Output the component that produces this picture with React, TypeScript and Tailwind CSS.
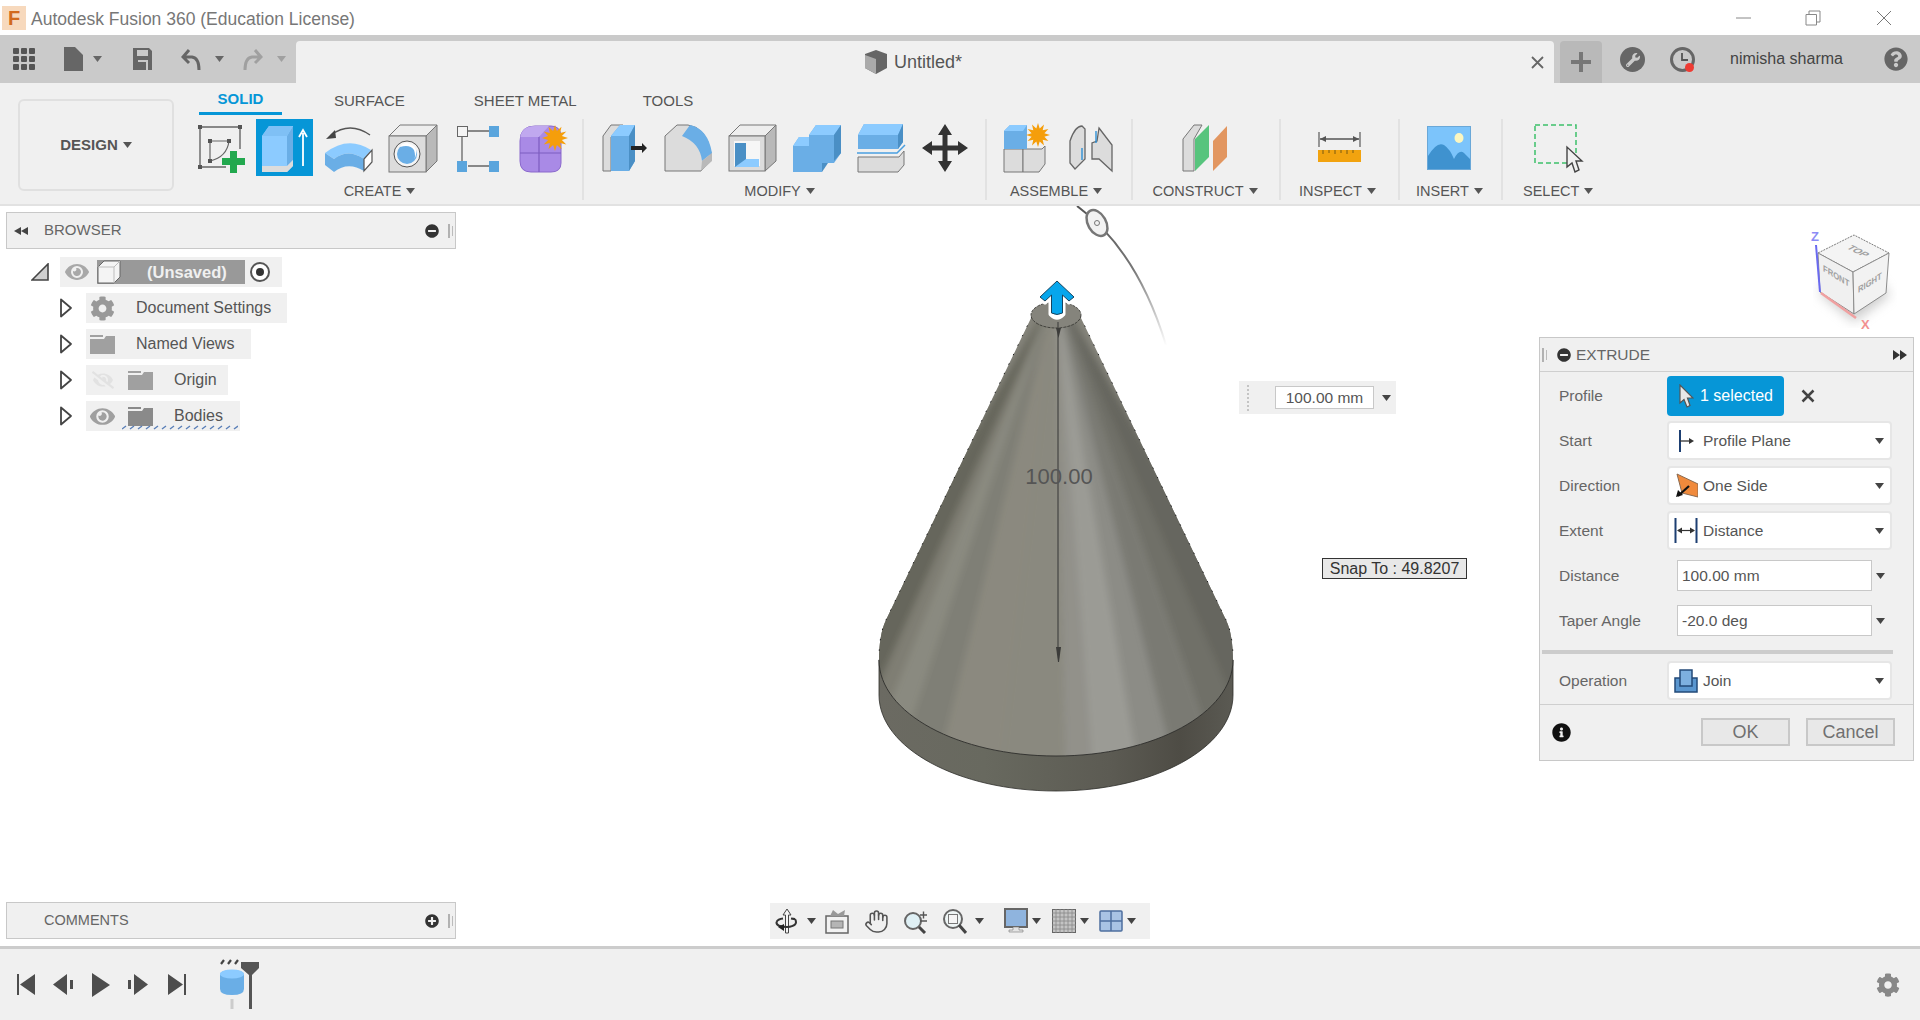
import React from 'react';
import { FaCog, FaEye, FaEyeSlash, FaInfoCircle, FaMinusCircle, FaPlusCircle, FaQuestionCircle, FaWrench } from 'react-icons/fa';
import { Hand } from 'lucide-react';

const BLUE = '#6aaee6';
const LIGHT = '#8ccbff';
const DARK = '#4a8fc5';
const GRAY = '#dcdcdc';
const LINE = '#666666';

const Caret = ({ className = '', color = '#555555' }: { className?: string; color?: string }) => (
  <svg width="9" height="6" viewBox="0 0 9 6" className={`shrink-0 ${className}`}>
    <path d="M0 0h9L4.500 6z" fill={color} />
  </svg>
);

const Tool = ({ children, active = false }: { children: React.ReactNode; active?: boolean }) => (
  <div className={`flex h-[57px] items-center justify-center ${active ? 'w-[57px] bg-[#0696d7]' : 'w-[64px]'}`}>
    {children}
  </div>
);

const Icon = ({ children, w = 50 }: { children: React.ReactNode; w?: number }) => (
  <svg width={w} height="50" viewBox={`0 0 ${w} 50`}>{children}</svg>
);

const Sketch = () => (
  <Icon>
    <path d="M4 4H44V26M4 4V44H30" fill="none" stroke={LINE} strokeWidth="1.400" />
    <path d="M14 18H33M14 18V38M33 18Q31 34 14 38" fill="none" stroke={LINE} strokeWidth="1.200" />
    {[[2, 2], [42, 2], [2, 42], [12, 16], [31, 16], [12, 36]].map(([x, y], i) => (
      <rect key={i} x={x} y={y} width="4" height="4" fill="#555555" />
    ))}
    <path d="M34 28h7v7h8v7h-8v8h-7v-8h-8v-7h8z" fill="#22a84e" />
  </Icon>
);

const Extrude = () => (
  <Icon>
    <path d="M2 13L9 3H33V43L27 49H2z" fill={LIGHT} />
    <path d="M27 13L33 3V37L27 43z" fill={BLUE} />
    <path d="M2 13L9 3H33L27 13z" fill="#7fc0f5" />
    <path d="M2 43H27L33 37V43L27 49H2z" fill={GRAY} />
    <path d="M43 43V10M39 14L43 7L47 14" fill="none" stroke="#ffffff" strokeWidth="1.800" />
  </Icon>
);

const Revolve = () => (
  <Icon>
    <path d="M7 12Q26 -2 46 12" fill="none" stroke="#555555" strokeWidth="1.500" />
    <path d="M2 16L11 7L12 15z" fill="#444444" />
    <path d="M1 30Q24 12 47 27L40 36Q24 25 10 36z" fill={LIGHT} />
    <path d="M1 30L10 36Q24 25 40 36V48Q24 38 10 49L1 42z" fill={BLUE} />
    <path d="M40 36L48 27V39L40 48z" fill="#ffffff" stroke="#555555" strokeWidth="1.200" />
  </Icon>
);

const HoleIcon = () => (
  <Icon>
    <path d="M1 13L12 2H49L38 13z" fill="#eeeeee" stroke="#777777" />
    <path d="M38 13L49 2V38L38 49z" fill="#b9b9b9" stroke="#777777" />
    <rect x="1" y="13" width="37" height="36" fill={GRAY} stroke="#777777" />
    <circle cx="19" cy="31" r="13" fill="#f4f4f4" stroke="#555555" />
    <circle cx="19" cy="31" r="10" fill={BLUE} />
    <path d="M12 24Q22 21 26 27Q28 33 26 37Q33 23 19 20Q14 20 12 24z" fill="#ffffff" />
  </Icon>
);

const BoxIcon = () => (
  <Icon w={44}>
    <path d="M12 8H33M6 14V38M12 43H33" stroke={LINE} strokeWidth="1.300" />
    <rect x="1.500" y="3.500" width="10" height="10" fill="#f4f4f4" stroke={LINE} />
    <rect x="33" y="3" width="10" height="11" fill="#5aa5dd" />
    <rect x="1" y="38" width="10" height="11" fill="#5aa5dd" />
    <rect x="33" y="38" width="10" height="11" fill="#5aa5dd" />
  </Icon>
);

const Star = ({ x, y, r }: { x: number; y: number; r: number }) => {
  const pts = Array.from({ length: 24 }, (_, i) => {
    const a = (i * Math.PI) / 12;
    const d = i % 2 === 0 ? r : r * 0.55;
    return `${(x + d * Math.cos(a)).toFixed(1)},${(y + d * Math.sin(a)).toFixed(1)}`;
  });
  return <polygon points={pts.join(' ')} fill="#f59e0b" />;
};

const NewBody = () => (
  <Icon>
    <path d="M1 18Q1 3 16 3H32Q42 3 42 14V40Q42 49 32 49H12Q1 49 1 38z" fill="#a98ae6" stroke="#8a68cc" />
    <path d="M1 30H42M20 10V49" stroke="#7d5cc0" strokeWidth="1.200" />
    <path d="M1 18Q1 3 16 3H30L20 14H1z" fill="#c0a8ef" />
    <Star x={36} y={15} r={13} />
  </Icon>
);

const PressPull = () => (
  <Icon w={46}>
    <path d="M1 48V13L9 2H21L9 14V48z" fill={GRAY} stroke="#777777" />
    <path d="M9 13L18 2H33V38L27 48H9z" fill={BLUE} />
    <path d="M9 13L18 2H33L27 13z" fill={LIGHT} />
    <path d="M27 13L33 2V38L27 48z" fill={DARK} />
    <path d="M29 23H40V20L45 25L40 30V27H29z" fill="#222222" />
  </Icon>
);

const Fillet = () => (
  <Icon>
    <path d="M1 48V13L13 2H24Q42 4 47 30V37L37 48z" fill={GRAY} stroke="#777777" />
    <path d="M26 2Q44 6 48 30L38 38Q36 20 18 13z" fill={BLUE} />
    <path d="M38 38L48 30V38L37 48z" fill="#b9b9b9" />
  </Icon>
);

const Shell = () => (
  <Icon>
    <path d="M1 13L12 2H48L37 13z" fill="#eeeeee" stroke="#777777" />
    <path d="M37 13L48 2V38L37 48z" fill="#b9b9b9" stroke="#777777" />
    <rect x="1" y="13" width="36" height="35" fill={GRAY} stroke="#777777" />
    <rect x="6" y="18" width="26" height="25" fill="#f6f6f6" />
    <path d="M7 20H18V36H31V44H7z" fill={DARK} />
    <path d="M18 36L7 44H31V36z" fill={LIGHT} />
  </Icon>
);

const Combine = () => (
  <Icon>
    <path d="M17 12L24 2H49V30L42 40H30V49H1V23L7 14H17z" fill={BLUE} />
    <path d="M17 12L24 2H49L42 12z" fill={LIGHT} />
    <path d="M42 12L49 2V30L42 38z" fill={DARK} />
    <path d="M1 23L7 14H17V23z" fill={LIGHT} />
    <path d="M30 40H36L30 49z" fill={DARK} />
  </Icon>
);

const OffsetFace = () => (
  <Icon>
    <path d="M2 12L8 1H47V19L42 26H2z" fill={BLUE} />
    <path d="M2 12L8 1H47L42 12z" fill={LIGHT} />
    <path d="M42 12L47 1V19L42 26z" fill={DARK} />
    <path d="M1 30H41L49 22" fill="none" stroke="#4a9fe0" strokeWidth="1.500" />
    <path d="M2 34H43L48 28V42L42 49H2z" fill={GRAY} stroke="#777777" />
  </Icon>
);

const Move = () => (
  <Icon w={48}>
    <path d="M24 1L31 12H26.500V22.500H37V18L47 25L37 32V27.500H26.500V38H31L24 49L17 38H21.500V27.500H11V32L1 25L11 18V22.500H21.500V12H17z" fill="#333333" />
  </Icon>
);

const Assemble = () => (
  <Icon w={48}>
    <path d="M1 26H20V49H1z" fill={GRAY} stroke="#777777" />
    <path d="M20 26H39L42 23V41L36 49H20z" fill={GRAY} stroke="#777777" />
    <path d="M1 8L7 2H24V26H1z" fill={BLUE} />
    <path d="M1 8L7 2H24L20 8z" fill={LIGHT} />
    <Star x={35} y={12} r={12} />
  </Icon>
);

const Joint = () => (
  <Icon w={44}>
    <path d="M1 18Q6 3 13 3L16 6V36L6 46L1 40z" fill={GRAY} stroke="#666666" strokeWidth="1.300" />
    <path d="M30 5L43 22V48L30 36L23 36V20L28 18z" fill={GRAY} stroke="#666666" strokeWidth="1.300" />
    <path d="M27 8V20M13 25V37" stroke="#2d8fd5" strokeWidth="1.400" />
  </Icon>
);

const Construct = () => (
  <Icon w={46}>
    <path d="M1 48V16L12 2H20L12 16V48z" fill={GRAY} stroke="#777777" />
    <path d="M13 16L27 2V34L13 48z" fill="#57c47d" />
    <path d="M31 18L45 3V34L31 48z" fill="#e29660" />
  </Icon>
);

const Inspect = () => (
  <Icon w={44}>
    <path d="M2 9V24M43 9V24" stroke="#666666" strokeWidth="1.300" />
    <path d="M3 16H42" stroke="#555555" strokeWidth="1.300" />
    <path d="M3 16L9 13V19zM42 16L36 13V19z" fill="#555555" />
    <rect x="1" y="27" width="43" height="12" fill="#f2a30f" />
    <path d="M6 27v4M12 27v3M18 27v4M24 27v3M30 27v4M36 27v3" stroke="#7a5a10" strokeWidth="1" />
  </Icon>
);

const Insert = () => (
  <Icon w={44}>
    <rect x="0.500" y="3.500" width="43" height="43" fill="#7cc4fb" stroke="#6aa8d8" />
    <ellipse cx="32" cy="15" rx="4.500" ry="5" fill="#fbf6c0" />
    <path d="M1 33Q10 18 17 22Q23 26 27 36Q32 26 37 30L43 36V46H1z" fill="#3f92cf" />
  </Icon>
);

const Select = () => (
  <svg width="50" height="50" viewBox="0 0 50 50">
    <rect x="1" y="2" width="41" height="38" fill="none" stroke="#3cc06a" strokeWidth="1.500" strokeDasharray="5 3" />
    <path d="M33 24V44L38 40L41 49L45 47L42 38H48z" fill="#f0f0f0" stroke="#444444" strokeWidth="1.400" />
  </svg>
);

const Group = ({ className, iconPad = '', labelPad = '', label, children }: { className: string; iconPad?: string; labelPad?: string; label: string; children: React.ReactNode }) => (
  <div className={`flex h-[81px] shrink-0 flex-col border-r-2 border-[#e2e2e2] ${className}`}>
    <div className={`flex h-[57px] items-center ${iconPad}`}>{children}</div>
    <div className={`mt-[7px] flex h-[18px] items-center justify-center text-[14.5px] text-[#555555] ${labelPad}`}>
      {label}
      <Caret className="ml-[5px] mb-[2px]" />
    </div>
  </div>
);

const Arrow = () => (
  <svg width="14" height="20" viewBox="0 0 14 20">
    <path d="M2 1.500L12 10L2 18.500z" fill="#ffffff" stroke="#444444" strokeWidth="1.800" strokeLinejoin="round" />
  </svg>
);

const Folder = ({ dark = false }: { dark?: boolean }) => (
  <svg width="25" height="19" viewBox="0 0 25 19">
    <path d="M0 0H13V2H0zM0 4H14L16 1H25V19H0z" fill={dark ? '#8a8a8a' : '#a0a0a0'} />
  </svg>
);

const BrowserRow = ({ className, children }: { className: string; children: React.ReactNode }) => (
  <div className="mb-[6px] flex h-[30px] items-center pl-[53px]">
    <Arrow />
    <div className={`ml-[13px] flex h-[30px] items-center bg-[#f0f0f0] text-[16px] text-[#555555] ${className}`}>{children}</div>
  </div>
);

const Grip = () => (
  <svg width="6" height="20" viewBox="0 0 6 20">
    <path d="M1 3V17" stroke="#888888" strokeWidth="1.200" />
    <path d="M4.500 5V15" stroke="#bbbbbb" strokeWidth="1" />
  </svg>
);

const Dropdown = ({ icon, text }: { icon: React.ReactNode; text: string }) => (
  <div className="flex h-[39px] w-[225px] items-center rounded-sm border-2 border-[#e6e6e6] bg-white">
    <div className="flex w-[34px] justify-center">{icon}</div>
    <span className="text-[15.500px] text-[#555555]">{text}</span>
    <Caret className="ml-auto mr-[6px]" color="#444444" />
  </div>
);

const Row = ({ label, children }: { label: string; children: React.ReactNode }) => (
  <div className="mb-[6px] flex h-[39px] items-center">
    <div className="w-[127px] pl-[19px] text-[15.500px] text-[#666666]">{label}</div>
    {children}
  </div>
);

const NumberRow = ({ label, value }: { label: string; value: string }) => (
  <div className="mb-[14px] flex h-[31px] items-center">
    <div className="w-[137px] pl-[19px] text-[15.500px] text-[#666666]">{label}</div>
    <div className="flex h-[31px] w-[195px] items-center border border-[#c8c8c8] bg-white pl-[4px] text-[15.500px] text-[#555555]">{value}</div>
    <Caret className="ml-[4px]" color="#444444" />
  </div>
);

const CONE = 'M1032 316L886 620C881 630 879 645 879 660C879 713 958 756 1056 756S1233 713 1233 660C1233 645 1231 630 1226 620L1080 316z';

// shading bands run from the tip down to the base
const BANDS: [number, number, string][] = [
  [-0.1, 0.03, '#66665c'],
  [0.03, 0.08, '#7f7e73'],
  [0.08, 0.15, '#8a8a80'],
  [0.15, 0.24, '#7f7f76'],
  [0.24, 0.38, '#8b897f'],
  [0.38, 0.52, '#8a897f'],
  [0.52, 0.58, '#92918a'],
  [0.58, 0.68, '#9b9b95'],
  [0.68, 0.76, '#8c8c86'],
  [0.76, 0.86, '#7a7a73'],
  [0.86, 0.95, '#6f6f68'],
  [0.95, 1.1, '#66665f'],
];

const Scene = () => (
  <svg className="absolute inset-0" width="1920" height="740" viewBox="0 206 1920 740">
    <defs>
      <linearGradient id="rimFill" x1="878" x2="1234" y1="0" y2="0" gradientUnits="userSpaceOnUse">
        <stop offset="0" stopColor="#6b6a62" />
        <stop offset="0.3" stopColor="#68695f" />
        <stop offset="0.65" stopColor="#5c5b53" />
        <stop offset="0.85" stopColor="#4e4c45" />
        <stop offset="1" stopColor="#5b5a53" />
      </linearGradient>
      <linearGradient id="arcFade" x1="1080" y1="206" x2="1168" y2="345" gradientUnits="userSpaceOnUse">
        <stop offset="0" stopColor="#555555" />
        <stop offset="0.5" stopColor="#777777" />
        <stop offset="1" stopColor="#ffffff" />
      </linearGradient>
      <clipPath id="coneClip"><path d={CONE} /></clipPath>
      <filter id="soft" x="-20%" y="-20%" width="140%" height="140%"><feGaussianBlur stdDeviation="3.500" /></filter>
      <filter id="cubeShadow"><feGaussianBlur stdDeviation="6" /></filter>
    </defs>

    {/* rotate handle */}
    <path d="M1077 206Q1137 250 1166 345" fill="none" stroke="url(#arcFade)" strokeWidth="2" />
    <ellipse cx="1097" cy="223" rx="9" ry="14" transform="rotate(-30 1097 223)" fill="#f2f2f2" stroke="#777777" strokeWidth="2.500" />
    <circle cx="1097" cy="223" r="2.500" fill="none" stroke="#777777" />

    {/* cone with base disc */}
    <path d="M879 660V695C879 748 958 791 1056 791S1233 748 1233 695V660z" fill="url(#rimFill)" stroke="#2d2d2a" strokeWidth="0.800" />
    <path d={CONE} fill="#85847b" />
    <g clipPath="url(#coneClip)">
      <g filter="url(#soft)">
        {BANDS.map(([a, b, c], i) => (
          <polygon key={i} points={`1056,290 ${1056 + (2 * a - 1) * 244},800 ${1056 + (2 * b - 1) * 244},800`} fill={c} />
        ))}
      </g>
    </g>
    <path d="M1032 316L886 620C881 630 879 645 879 660M1080 316L1226 620C1231 630 1233 645 1233 660" fill="none" stroke="#222222" strokeWidth="1" strokeDasharray="1.500 9" />
    <path d="M879 660C879 713 958 756 1056 756S1233 713 1233 660" fill="none" stroke="#2d2d2a" strokeWidth="0.900" />
    <ellipse cx="1056" cy="315" rx="25" ry="13" fill="#85847c" stroke="#2d2d2a" strokeWidth="0.800" strokeDasharray="3 1" />

    {/* dimension line */}
    <path d="M1058 322V655" stroke="#4a4a48" strokeWidth="1.300" />
    <path d="M1056 647H1061L1059 662H1058z" fill="#3c3c3a" />
    <path d="M1056 328H1061L1058.500 338z" fill="#3c3c3a" />
    <text x="1059" y="484" textAnchor="middle" fontFamily="Liberation Sans" fontSize="22" fill="#555555">100.00</text>

    {/* drag arrow */}
    <path d="M1057 279L1075 297L1069 302L1063 296V314Q1057 320 1051 314V296L1045 302L1039 297z" fill="#ffffff" stroke="#ffffff" strokeWidth="5" strokeLinejoin="round" />
    <path d="M1057 281L1074 297L1069 301L1062.500 295V313Q1057 316 1051.500 313V295L1045 301L1040 297z" fill="#06a6ec" stroke="#17445f" strokeWidth="1" strokeLinejoin="round" />

    {/* view cube */}
    <path d="M1820 294L1854 322L1890 295L1870 270H1830z" fill="#9a9a9a" opacity="0.5" filter="url(#cubeShadow)" />
    <path d="M1818 253L1854 235L1889 253L1853 272z" fill="#f4f4f4" stroke="#7b7b7b" strokeDasharray="2 1" />
    <path d="M1818 253L1853 272L1854 314L1820 292z" fill="#f0f0f0" stroke="#8b8b8b" />
    <path d="M1853 272L1889 253L1886 293L1854 314z" fill="#f2f2f2" stroke="#8b8b8b" />
    <path d="M1816 245L1820 292" stroke="#6a6af0" strokeWidth="2" />
    <path d="M1821 293L1856 318" stroke="#f0a0a0" strokeWidth="2.500" />
    <text x="1811" y="241" fontFamily="Liberation Sans" fontSize="13" fontWeight="700" fill="#8c8cf5">Z</text>
    <text x="1861" y="329" fontFamily="Liberation Sans" fontSize="13" fontWeight="700" fill="#f29090">X</text>
    <text transform="matrix(0.9 0.45 -0.9 0.45 1846 248)" fontFamily="Liberation Sans" fontSize="10" fontWeight="700" fill="#a0a0a0">TOP</text>
    <text transform="matrix(0.85 0.52 0 1 1823 271)" fontFamily="Liberation Sans" fontSize="9" fontWeight="700" fill="#a0a0a0">FRONT</text>
    <text transform="matrix(0.85 -0.52 0 1 1858 293)" fontFamily="Liberation Sans" fontSize="9" fontWeight="700" fill="#a0a0a0">RIGHT</text>
  </svg>
);

const NavBar = () => (
  <div className="absolute left-[770px] top-[697px] flex h-[36px] w-[380px] items-center bg-[#f0f0f0]">
    <svg className="ml-[5px]" width="24" height="28" viewBox="0 0 24 28">
      <path d="M12 2L8 8H10.500V26H13.500V8H16z" fill="#f4f4f4" stroke="#444444" />
      <path d="M20 12Q24 19 12 20Q1 20 1.500 15M1.500 15Q3 12 8 11.500M16 11.500Q19 12 20 12" fill="none" stroke="#333333" strokeWidth="2" />
      <path d="M9 17L3 20L9 24z" fill="#222222" />
    </svg>
    <Caret className="ml-[8px]" color="#444444" />
    <svg className="ml-[9px]" width="24" height="26" viewBox="0 0 24 26">
      <rect x="1" y="8" width="22" height="17" fill="#f2f2f2" stroke="#666666" strokeWidth="1.500" />
      <rect x="6" y="13" width="12" height="7" fill="#b5b5b5" stroke="#777777" />
      <path d="M5 8L8 2L13 6L20 2L19 8z" fill="#999999" />
    </svg>
    <Hand className="ml-[15px]" size={25} color="#555555" strokeWidth={1.500} />
    <svg className="ml-[14px]" width="26" height="26" viewBox="0 0 26 26">
      <circle cx="10" cy="13" r="8" fill="#dff0f5" stroke="#666666" strokeWidth="2" />
      <path d="M16 19L22 25" stroke="#444444" strokeWidth="3" />
      <path d="M17 7h7M20.500 3.500v7M17 13h7" stroke="#555555" strokeWidth="1.400" />
    </svg>
    <svg className="ml-[14px]" width="24" height="26" viewBox="0 0 24 26">
      <circle cx="10" cy="11" r="9" fill="#eef5f5" stroke="#666666" strokeWidth="2" />
      <rect x="5.500" y="6.500" width="9" height="9" fill="#f5f5f5" stroke="#777777" />
      <path d="M16 17L23 25" stroke="#444444" strokeWidth="3" />
    </svg>
    <Caret className="ml-[8px]" color="#444444" />
    <svg className="ml-[20px]" width="24" height="26" viewBox="0 0 24 26">
      <rect x="1" y="1" width="22" height="18" fill="#8fb4de" stroke="#666666" strokeWidth="2" />
      <path d="M9 19H15V22H19V24H5V22H9z" fill="#e4e4e4" stroke="#777777" strokeWidth="0.600" />
    </svg>
    <Caret className="ml-[4px]" color="#444444" />
    <svg className="ml-[11px]" width="24" height="24" viewBox="0 0 24 24">
      <rect x="0.500" y="0.500" width="23" height="23" fill="#c4c4c4" stroke="#666666" />
      <path d="M4 0V24M8 0V24M12 0V24M16 0V24M20 0V24M0 4H24M0 8H24M0 12H24M0 16H24M0 20H24" stroke="#888888" strokeWidth="0.800" />
    </svg>
    <Caret className="ml-[4px]" color="#444444" />
    <svg className="ml-[10px]" width="24" height="22" viewBox="0 0 24 22">
      <rect x="1" y="1" width="22" height="20" rx="1" fill="#a9c3e4" stroke="#4d6f9f" strokeWidth="1.500" />
      <path d="M12 1V21M1 11H23" stroke="#4d6f9f" strokeWidth="1.500" />
    </svg>
    <Caret className="ml-[4px]" color="#444444" />
  </div>
);

const ExtrudePanel = () => (
  <div className="absolute left-[1539px] top-[131px] h-[424px] w-[375px] border border-[#c8c8c8] bg-[#f0f0f0]">
    <div className="flex h-[34px] items-center border-b border-[#cfcfcf] pl-[2px]">
      <Grip />
      <FaMinusCircle className="ml-[9px]" size={14} color="#333333" />
      <span className="ml-[5px] text-[15.500px] text-[#666666]">EXTRUDE</span>
      <svg className="ml-auto mr-[6px]" width="14" height="10" viewBox="0 0 14 10">
        <path d="M0 0L7 5L0 10zM7 0L14 5L7 10z" fill="#333333" />
      </svg>
    </div>
    <div className="pt-[4px]">
      <div className="mb-[5px] flex h-[40px] items-center">
        <div className="w-[127px] pl-[19px] text-[15.500px] text-[#666666]">Profile</div>
        <div className="flex h-[40px] w-[117px] items-center rounded-sm bg-[#0696d7] pl-[11px] text-[16px] text-white">
          <svg width="16" height="24" viewBox="0 0 16 24">
            <path d="M2 1V19L6 15.500L9 23L12 21.500L9.500 14H15z" fill="#e8e8e8" stroke="#555555" strokeWidth="1.200" />
          </svg>
          <span className="ml-[6px]">1 selected</span>
        </div>
        <svg className="ml-[17px]" width="14" height="14" viewBox="0 0 14 14">
          <path d="M1.500 1.500L12.500 12.500M12.500 1.500L1.500 12.500" stroke="#444444" strokeWidth="2.500" />
        </svg>
      </div>
      <Row label="Start">
        <Dropdown
          text="Profile Plane"
          icon={
            <svg width="16" height="24" viewBox="0 0 16 24">
              <path d="M2 1V23" stroke="#1d3f72" strokeWidth="2" />
              <path d="M2 12H12" stroke="#333333" strokeWidth="1.300" />
              <path d="M11 9L16 12L11 15z" fill="#333333" />
            </svg>
          }
        />
      </Row>
      <Row label="Direction">
        <Dropdown
          text="One Side"
          icon={
            <svg width="23" height="25" viewBox="0 0 23 25">
              <path d="M2 1L23 11V24L7 20z" fill="#f08a3c" stroke="#8a6a50" />
              <path d="M14 13L3 23" stroke="#111111" strokeWidth="2.200" />
              <path d="M1 24L3 17L8 22z" fill="#111111" />
            </svg>
          }
        />
      </Row>
      <Row label="Extent">
        <Dropdown
          text="Distance"
          icon={
            <svg width="24" height="25" viewBox="0 0 24 25">
              <path d="M1.500 0V25M22.500 0V25" stroke="#1d3f72" strokeWidth="2" />
              <path d="M4 12.500H20" stroke="#333333" strokeWidth="1.200" />
              <path d="M3 12.500L8 9.500V15.500zM21 12.500L16 9.500V15.500z" fill="#333333" />
            </svg>
          }
        />
      </Row>
      <div className="pt-[4px]">
        <NumberRow label="Distance" value="100.00 mm" />
        <NumberRow label="Taper Angle" value="-20.0 deg" />
      </div>
      <div className="ml-[2px] mt-[1px] h-[4px] w-[351px] bg-[#cccccc]" />
      <div className="mt-[7px]">
        <Row label="Operation">
          <Dropdown
            text="Join"
            icon={
              <svg width="24" height="24" viewBox="0 0 24 24">
                <rect x="1" y="9" width="22" height="14" fill="#5a96cf" stroke="#234a78" strokeWidth="1.500" />
                <rect x="6" y="1" width="12" height="16" fill="#7db0e0" stroke="#234a78" strokeWidth="1.500" />
              </svg>
            }
          />
        </Row>
      </div>
    </div>
    <div className="-mt-[2px] flex h-[55px] items-center border-t border-[#cfcfcf]">
      <FaInfoCircle className="ml-[12px]" size={19} color="#111111" />
      <button className="ml-[130px] h-[28px] w-[89px] border-2 border-[#c8c8c8] bg-[#e8e8e8] text-[18px] leading-none text-[#707070]">OK</button>
      <button className="ml-[16px] h-[28px] w-[89px] border-2 border-[#c8c8c8] bg-[#e8e8e8] text-[18px] leading-none text-[#707070]">Cancel</button>
    </div>
  </div>
);

export default function App() {
  return (
    <div className="flex h-screen w-full flex-col overflow-hidden bg-white font-['Liberation_Sans',Arial,sans-serif]">
      {/* window title */}
      <div className="flex h-[35px] shrink-0 items-center">
        <div className="ml-[2px] flex h-[24px] w-[24px] items-center justify-center bg-[#f7d9bd] text-[20px] font-bold leading-none text-[#d2691e]">F</div>
        <span className="ml-[5px] pt-[3px] text-[17.5px] text-[#777777]">Autodesk Fusion 360 (Education License)</span>
        <svg className="ml-auto" width="16" height="2" viewBox="0 0 16 2"><path d="M0 1H15" stroke="#888888" /></svg>
        <svg className="ml-[53px]" width="16" height="16" viewBox="0 0 16 16">
          <path d="M1 4.500H11.500V15H1zM4 4V1H15V12H12" fill="none" stroke="#888888" />
        </svg>
        <svg className="ml-[55px] mr-[28px]" width="16" height="16" viewBox="0 0 16 16">
          <path d="M1 1L15 15M15 1L1 15" stroke="#777777" />
        </svg>
      </div>

      {/* tab bar */}
      <div className="flex h-[48px] shrink-0 bg-[#cacaca]">
        <div className="flex w-[296px] items-center pb-[1px]">
          <svg className="ml-[13px]" width="22" height="22" viewBox="0 0 22 22">
            {[0, 8, 16].flatMap((y) => [0, 8, 16].map((x) => (
              <rect key={`${x}-${y}`} x={x} y={y} width="6" height="6" rx="1" fill="#555555" />
            )))}
          </svg>
          <svg className="ml-[28px]" width="20" height="24" viewBox="0 0 20 24">
            <path d="M1 0H12L20 8V24H1z" fill="#666666" />
          </svg>
          <Caret className="ml-[10px]" color="#666666" />
          <svg className="ml-[30px]" width="21" height="24" viewBox="0 0 21 24">
            <path d="M1 1H17L20 4V23H1z" fill="#666666" />
            <rect x="5" y="3" width="11" height="6" fill="#cacaca" />
            <path d="M6 14H15V23" fill="none" stroke="#cacaca" strokeWidth="2" />
          </svg>
          <svg className="ml-[28px]" width="20" height="24" viewBox="0 0 20 24">
            <path d="M8 3L2 10L8 16M2 10H11Q18 11 18 23" fill="none" stroke="#666666" strokeWidth="3" />
          </svg>
          <Caret className="ml-[14px]" color="#666666" />
          <svg className="ml-[19px]" width="20" height="24" viewBox="0 0 20 24">
            <path d="M12 3L18 10L12 16M18 10H9Q2 11 2 23" fill="none" stroke="#a0a0a0" strokeWidth="3" />
          </svg>
          <Caret className="ml-[14px]" color="#a0a0a0" />
        </div>
        <div className="mt-[6px] flex w-[1258px] items-center rounded-t-[4px] bg-[#f0f0f0] pl-[568px]">
          <svg width="24" height="24" viewBox="0 0 24 24">
            <path d="M1 4L12 0L23 4V18L12 24L1 18z" fill="#666666" />
            <path d="M1 5L12 9V24L1 18z" fill="#aaaaaa" />
          </svg>
          <span className="ml-[6px] pt-[1px] text-[18px] text-[#555555]">Untitled*</span>
          <svg className="ml-auto mr-[10px]" width="13" height="13" viewBox="0 0 13 13">
            <path d="M1 1L12 12M12 1L1 12" stroke="#666666" strokeWidth="1.800" />
          </svg>
        </div>
        <div className="ml-[6px] mt-[6px] flex h-[42px] w-[42px] items-center justify-center rounded-t-[4px] bg-[#b9b9b9]">
          <svg width="20" height="20" viewBox="0 0 20 20"><path d="M8 0H12V8H20V12H12V20H8V12H0V8H8z" fill="#777777" /></svg>
        </div>
        <div className="ml-[18px] mt-[12px] flex h-[25px] w-[25px] items-center justify-center rounded-full bg-[#666666]">
          <FaWrench size={14} color="#cacaca" />
        </div>
        <div className="relative ml-[25px] mt-[12px] flex h-[25px] w-[25px] items-center justify-center rounded-full border-[3px] border-[#666666]">
          <svg width="15" height="15" viewBox="0 0 15 15"><path d="M7 1V8H13" fill="none" stroke="#555555" strokeWidth="1.800" /></svg>
          <span className="absolute -bottom-[3px] -right-[2px] h-[9px] w-[9px] rounded-full bg-[#ee3b33]" />
        </div>
        <span className="ml-[35px] mt-[15px] text-[16px] leading-[18px] text-[#444444]">nimisha sharma</span>
        <FaQuestionCircle className="ml-[41px] mt-[12px]" size={24} color="#666666" />
      </div>

      {/* ribbon */}
      <div className="flex h-[123px] shrink-0 border-b-2 border-[#e2e2e2] bg-[#f0f0f0]">
        <div className="ml-[18px] mt-[16px] flex h-[92px] w-[156px] items-center justify-center rounded-[6px] border-2 border-[#e0e0e0] text-[15px] font-bold text-[#555555]">
          DESIGN
          <Caret className="ml-[5px]" />
        </div>
        <div className="ml-[15px] flex flex-col">
          <div className="flex h-[36px] text-[15px] text-[#555555]">
            <div className="ml-[10px] flex h-[32px] w-[83px] items-center justify-center border-b-[3px] border-[#0696d7] pt-[4px] font-bold text-[#0696d7]">SOLID</div>
            <div className="ml-[52px] flex h-[32px] items-center pt-[4px]">SURFACE</div>
            <div className="ml-[69px] flex h-[32px] items-center pt-[4px]">SHEET METAL</div>
            <div className="ml-[66px] flex h-[32px] items-center pt-[4px]">TOOLS</div>
          </div>
          <div className="flex">
            <Group className="w-[395px]" labelPad="pr-[12px]" label="CREATE">
              <Tool><Sketch /></Tool>
              <div className="w-[3px]" />
              <Tool active><Extrude /></Tool>
              <div className="w-[4px]" />
              <Tool><Revolve /></Tool>
              <Tool><HoleIcon /></Tool>
              <div className="w-[1px]" />
              <Tool><BoxIcon /></Tool>
              <div className="w-[2px]" />
              <Tool><NewBody /></Tool>
            </Group>
            <Group className="w-[403px]" iconPad="pl-[9px]" labelPad="pr-[10px]" label="MODIFY">
              <Tool><PressPull /></Tool>
              <Tool><Fillet /></Tool>
              <Tool><Shell /></Tool>
              <Tool><Combine /></Tool>
              <Tool><OffsetFace /></Tool>
              <Tool><Move /></Tool>
            </Group>
            <Group className="w-[146px]" iconPad="pl-[8px]" labelPad="pr-[6px]" label="ASSEMBLE">
              <Tool><Assemble /></Tool>
              <Tool><Joint /></Tool>
            </Group>
            <Group className="w-[148px]" iconPad="pl-[40px]" labelPad="pr-[2px]" label="CONSTRUCT">
              <Tool><Construct /></Tool>
            </Group>
            <Group className="w-[119px]" iconPad="pl-[26px]" labelPad="pr-[4px]" label="INSPECT">
              <Tool><Inspect /></Tool>
            </Group>
            <Group className="w-[103px]" iconPad="pl-[17px]" labelPad="pr-[2px]" label="INSERT">
              <Tool><Insert /></Tool>
            </Group>
            <div className="flex h-[81px] w-[130px] shrink-0 flex-col">
              <div className="flex h-[57px] items-center pl-[24px]"><Tool><Select /></Tool></div>
              <div className="mt-[7px] flex h-[18px] items-center justify-start pl-[20px] text-[14.5px] text-[#555555]">
                SELECT
                <Caret className="ml-[5px] mb-[2px]" />
              </div>
            </div>
          </div>
        </div>
      </div>

      {/* canvas */}
      <div className="relative flex-1 overflow-hidden bg-white">
        <Scene />

        <div className="absolute left-[6px] top-[6px] w-[450px]">
          <div className="flex h-[37px] items-center border border-[#c8c8c8] bg-[#f0f0f0]">
            <svg className="ml-[7px]" width="14" height="8" viewBox="0 0 14 8">
              <path d="M7 0L0 4L7 8zM14 0L7 4L14 8z" fill="#444444" />
            </svg>
            <span className="ml-[16px] text-[15px] text-[#666666]">BROWSER</span>
            <FaMinusCircle className="ml-auto" size={14} color="#333333" />
            <div className="ml-[9px] mr-[1px]"><Grip /></div>
          </div>
          <div className="mb-[6px] mt-[8px] flex h-[30px] items-center pl-[25px]">
            <svg width="18" height="18" viewBox="0 0 18 18">
              <path d="M1 17L17 1V17z" fill="#cfcfcf" stroke="#444444" strokeWidth="1.600" />
            </svg>
            <div className="ml-[11px] flex h-[30px] w-[222px] items-center bg-[#f0f0f0]">
              <FaEye className="ml-[5px]" size={24} color="#a8a8a8" />
              <div className="ml-[8px] flex h-[24px] w-[148px] items-center bg-[#999999]">
                <svg width="24" height="24" viewBox="0 0 24 24">
                  <path d="M1 7L7 1H23V17L17 23H1z" fill="#f4f4f4" stroke="#666666" />
                  <path d="M1 7H17V23M17 7L23 1" fill="none" stroke="#bdbdbd" />
                </svg>
                <span className="ml-[26px] text-[16.5px] font-bold text-[#f0f0f0]">(Unsaved)</span>
              </div>
              <div className="ml-[5px] flex h-[20px] w-[20px] items-center justify-center rounded-full border-2 border-[#555555] bg-white">
                <span className="h-[8px] w-[8px] rounded-full bg-[#333333]" />
              </div>
            </div>
          </div>
          <BrowserRow className="w-[201px]">
            <FaCog className="ml-[4px]" size={25} color="#999999" />
            <span className="ml-[21px]">Document Settings</span>
          </BrowserRow>
          <BrowserRow className="w-[165px]">
            <div className="ml-[4px]"><Folder /></div>
            <span className="ml-[21px]">Named Views</span>
          </BrowserRow>
          <BrowserRow className="w-[142px]">
            <FaEyeSlash className="ml-[6px]" size={22} color="#e2e2e2" />
            <div className="ml-[14px]"><Folder /></div>
            <span className="ml-[21px]">Origin</span>
          </BrowserRow>
          <BrowserRow className="relative w-[154px]">
            <FaEye className="ml-[4px]" size={25} color="#a0a0a0" />
            <div className="ml-[13px]"><Folder dark /></div>
            <span className="ml-[21px]">Bodies</span>
            <svg className="absolute left-[36px] top-[24px]" width="116" height="5" viewBox="0 0 116 5">
              <path d="M0 4L4 1M8 4L12 1M16 4L20 1M24 4L28 1M32 4L36 1M40 4L44 1M48 4L52 1M56 4L60 1M64 4L68 1M72 4L76 1M80 4L84 1M88 4L92 1M96 4L100 1M104 4L108 1M112 4L116 1" stroke="#5a7fb8" strokeWidth="1.400" />
            </svg>
          </BrowserRow>
        </div>

        <div className="absolute left-[1239px] top-[175px] flex h-[33px] w-[157px] items-center bg-[#f0f0f0]">
          <div className="ml-[8px] h-[26px] w-[2px] border-l-2 border-dotted border-[#c4c4c4]" />
          <div className="ml-[26px] flex h-[23px] w-[99px] items-center justify-center border border-[#c8c8c8] bg-white text-[15.5px] text-[#555555]">100.00 mm</div>
          <Caret className="ml-[8px]" color="#444444" />
        </div>

        <div className="absolute left-[1322px] top-[352px] flex h-[21px] w-[145px] items-center justify-center border border-[#333333] bg-[#e8e8e8] text-[16px] text-[#333333]">Snap To : 49.8207</div>

        <ExtrudePanel />
        <NavBar />

        <div className="absolute left-[6px] top-[696px] flex h-[37px] w-[450px] items-center border border-[#c8c8c8] bg-[#f0f0f0]">
          <span className="ml-[37px] text-[14.5px] text-[#666666]">COMMENTS</span>
          <FaPlusCircle className="ml-auto" size={14} color="#333333" />
          <div className="ml-[9px] mr-[1px]"><Grip /></div>
        </div>
      </div>

      {/* timeline */}
      <div className="flex h-[74px] shrink-0 items-center border-t-[3px] border-[#cccccc] bg-[#f0f0f0] pl-[17px]">
        <svg width="18" height="21" viewBox="0 0 18 21"><path d="M0 0H2V21H0zM18 0V21L3 10.500z" fill="#4d4d4d" /></svg>
        <svg className="ml-[18px]" width="20" height="21" viewBox="0 0 20 21"><path d="M14 0V21L0 10.500zM17 6H20V15H17z" fill="#4d4d4d" /></svg>
        <svg className="ml-[19px]" width="18" height="24" viewBox="0 0 18 24"><path d="M0 0L18 12L0 24z" fill="#4d4d4d" /></svg>
        <svg className="ml-[18px]" width="20" height="21" viewBox="0 0 20 21"><path d="M6 0V21L20 10.500zM0 6H3V15H0z" fill="#4d4d4d" /></svg>
        <svg className="ml-[20px]" width="18" height="21" viewBox="0 0 18 21"><path d="M16 0H18V21H16zM0 0V21L15 10.500z" fill="#4d4d4d" /></svg>
        <svg className="ml-[33px]" width="42" height="52" viewBox="0 0 42 52">
          <path d="M2 5L5 1M9 5L12 1M16 5L19 1" stroke="#444444" strokeWidth="2.200" />
          <path d="M1 16Q1 11 13 11Q25 11 25 16V30Q25 36 13 36Q1 36 1 30z" fill={BLUE} />
          <ellipse cx="13" cy="15" rx="12" ry="4.500" fill={LIGHT} />
          <path d="M13 40V50" stroke="#cccccc" strokeWidth="3" />
          <path d="M22 3H40V9L33 16V50H30V16L22 9z" fill="#555555" />
        </svg>
        <FaCog className="ml-auto mr-[20px]" size={24} color="#888888" />
      </div>
    </div>
  );
}
